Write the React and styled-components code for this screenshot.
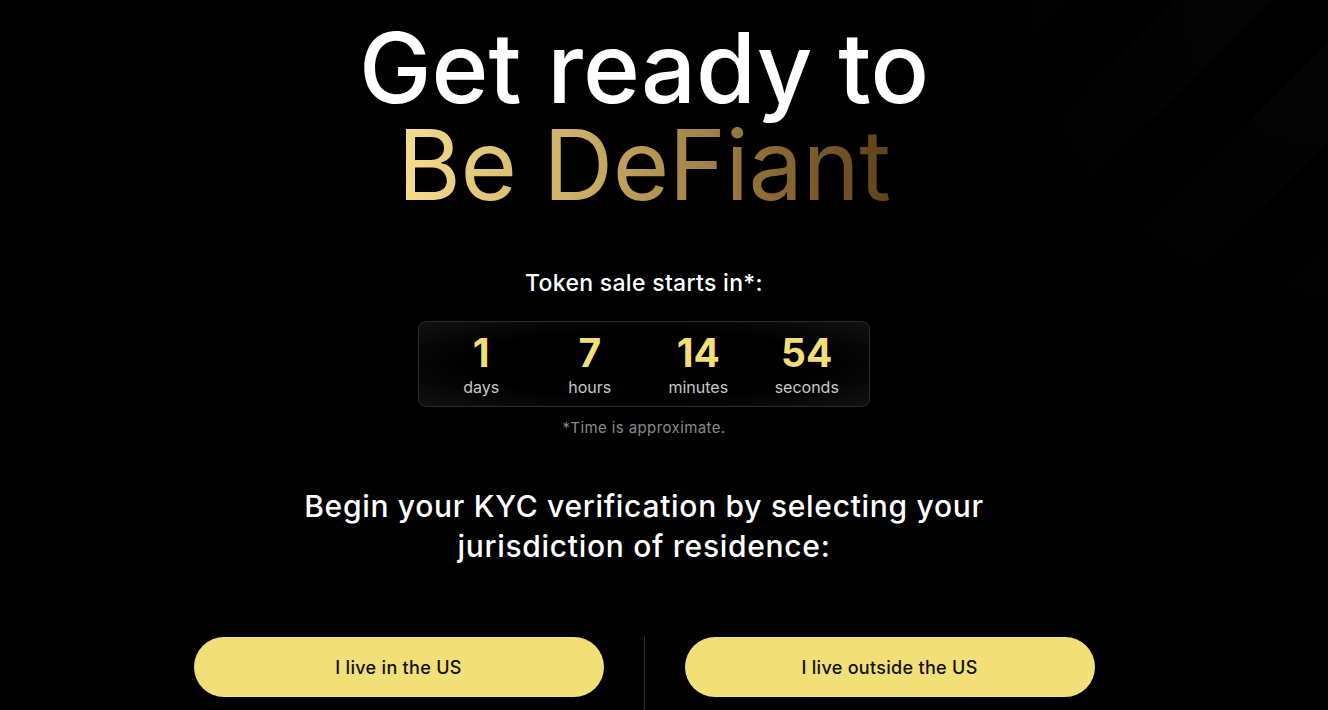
import styled, { createGlobalStyle } from "styled-components";

const GlobalStyle = createGlobalStyle`
  html, body {
    margin: 0;
    padding: 0;
    background: #000;
  }
  body {
    font-family: "Inter", "Liberation Sans", sans-serif;
    color: #fff;
  }
`;

const Page = styled.div`
  position: relative;
  min-height: 710px;
  overflow: hidden;
  background-color: #000;
  &::before {
    content: "";
    position: absolute;
    top: 0;
    right: 0;
    width: 420px;
    height: 340px;
    background: repeating-linear-gradient(
      -45deg,
      rgba(255, 240, 200, 0.016) 0 70px,
      rgba(0, 0, 0, 0) 70px 140px
    );
    -webkit-mask-image: radial-gradient(circle at 100% 0%, #000 20%, transparent 75%);
    mask-image: radial-gradient(circle at 100% 0%, #000 20%, transparent 75%);
    pointer-events: none;
  }
`;

const Main = styled.main`
  position: relative;
  display: flex;
  flex-direction: column;
  align-items: center;
  padding: 19px 40px 0 0;
`;

const Title = styled.h1`
  margin: 0;
  text-align: center;
  font-size: 97px;
  font-weight: 500;
  line-height: 97px;
`;

const Gold = styled.span`
  display: inline-block;
  font-weight: 400;
  letter-spacing: -0.5px;
  background: linear-gradient(90deg, #f6de8d 0%, #c9aa63 40%, #8d6c35 75%, #5f4119 100%);
  -webkit-background-clip: text;
  background-clip: text;
  color: transparent;
`;

const StartsIn = styled.p`
  margin: 56px 0 0;
  font-size: 23px;
  font-weight: 500;
  letter-spacing: 0.3px;
`;

const Countdown = styled.div`
  margin-top: 24px;
  width: 452px;
  height: 86px;
  box-sizing: border-box;
  display: grid;
  grid-template-columns: repeat(4, 1fr);
  padding: 0 8px;
  border: 1px solid #2c2c2c;
  border-radius: 8px;
  background: radial-gradient(ellipse at center, #000 55%, #111 100%);
`;

const Unit = styled.div`
  display: flex;
  flex-direction: column;
  align-items: center;
  justify-content: center;
  padding-top: 2px;
`;

const Num = styled.span`
  font-size: 39px;
  font-weight: 700;
  line-height: 40px;
  color: #f3df77;
`;

const Label = styled.span`
  margin-top: 4px;
  font-size: 16px;
  line-height: 20px;
  color: #c8c8c8;
`;

const Note = styled.p`
  margin: 11px 0 0;
  font-size: 15px;
  letter-spacing: 0.4px;
  color: #8a8a8a;
`;

const Kyc = styled.h2`
  margin: 49px 0 0;
  max-width: 720px;
  text-align: center;
  font-size: 30px;
  line-height: 40px;
  font-weight: 500;
  letter-spacing: 0.7px;
`;

const Choices = styled.div`
  margin-top: 71px;
  display: flex;
  align-items: flex-start;
  gap: 40px;
`;

const Divider = styled.div`
  width: 1px;
  height: 80px;
  margin-top: -1px;
  background: #2e2e2e;
`;

const Choice = styled.button`
  width: 410px;
  height: 60px;
  border: none;
  border-radius: 30px;
  background: #f3df77;
  color: #111;
  font-family: "Inter", "Liberation Sans", sans-serif;
  font-size: 18px;
  font-weight: 500;
  letter-spacing: 0.3px;
  cursor: pointer;
`;

const units = [
  { value: 1, label: "days" },
  { value: 7, label: "hours" },
  { value: 14, label: "minutes" },
  { value: 54, label: "seconds" },
];

export default function App() {
  return (
    <>
      <GlobalStyle />
      <Page>
        <Main>
          <Title>
            Get ready to
            <br />
            <Gold>Be DeFiant</Gold>
          </Title>
          <StartsIn>Token sale starts in*:</StartsIn>
          <Countdown>
            {units.map((u) => (
              <Unit key={u.label}>
                <Num>{u.value}</Num>
                <Label>{u.label}</Label>
              </Unit>
            ))}
          </Countdown>
          <Note>*Time is approximate.</Note>
          <Kyc>Begin your KYC verification by selecting your jurisdiction of residence:</Kyc>
          <Choices>
            <Choice>I live in the US</Choice>
            <Divider />
            <Choice>I live outside the US</Choice>
          </Choices>
        </Main>
      </Page>
    </>
  );
}
